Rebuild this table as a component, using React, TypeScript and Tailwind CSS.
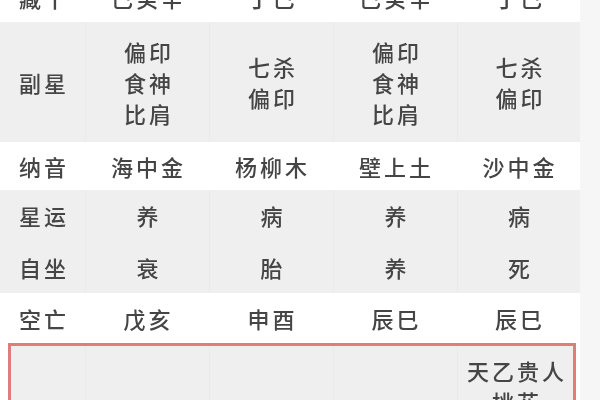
const cols = ["w-[85px]", "w-[124px]", "w-[124px]", "w-[124px]", "w-[123px]"];

type Row = { label: string; cells: string[][]; bg: string; h: string };

const rows: Row[] = [
  { label: "藏干", cells: [["己癸辛"], ["丁己"], ["己癸辛"], ["丁己"]], bg: "bg-white", h: "h-[49px] -mt-[27px]" },
  {
    label: "副星",
    cells: [["偏印", "食神", "比肩"], ["七杀", "偏印"], ["偏印", "食神", "比肩"], ["七杀", "偏印"]],
    bg: "bg-[#efefef]",
    h: "h-[120px]",
  },
  { label: "纳音", cells: [["海中金"], ["杨柳木"], ["壁上土"], ["沙中金"]], bg: "bg-white", h: "h-[48px]" },
  { label: "星运", cells: [["养"], ["病"], ["养"], ["病"]], bg: "bg-[#efefef]", h: "h-[51px]" },
  { label: "自坐", cells: [["衰"], ["胎"], ["养"], ["死"]], bg: "bg-[#efefef]", h: "h-[52px]" },
  { label: "空亡", cells: [["戊亥"], ["申酉"], ["辰巳"], ["辰巳"]], bg: "bg-white", h: "h-[50px]" },
];

function Cell({ lines, w, divider }: { lines: string[]; w: string; divider: boolean }) {
  return (
    <div
      className={`${w} flex flex-col items-center justify-center leading-[31px] ${
        divider ? "border-l border-[#eaeaea]" : ""
      }`}
    >
      {lines.map((t, i) => (
        <span key={i} className="tracking-[3px] pl-[3px]">
          {t}
        </span>
      ))}
    </div>
  );
}

export default function App() {
  return (
    <div
      className="w-[600px] h-[400px] overflow-hidden flex bg-[#f6f6f6] text-[#454545] text-[22px] font-medium blur-[0.4px]"
      style={{ fontFamily: "'Noto Sans CJK SC', 'Noto Sans', sans-serif" }}
    >
      <div className="w-[580px] flex flex-col">
        {rows.map((r) => (
          <div key={r.label} className={`flex shrink-0 ${r.bg} ${r.h}`}>
            <Cell lines={[r.label]} w={cols[0]} divider={false} />
            {r.cells.map((c, i) => (
              <Cell key={i} lines={c} w={cols[i + 1]} divider={r.bg !== "bg-white"} />
            ))}
          </div>
        ))}

        {/* 神煞 row, highlighted */}
        <div className="flex shrink-0 bg-white pl-[8px] pr-[4px]">
          <div className="flex-1 flex border-[3px] border-b-0 border-[#e27b7b] bg-[#efefef] h-[80px]">
            <div className="w-[74px]" />
            <div className="w-[124px] border-l border-[#eaeaea]" />
            <div className="w-[124px] border-l border-[#eaeaea]" />
            <div className="w-[124px] border-l border-[#eaeaea]" />
            <div className="flex-1 flex flex-col items-center pt-[9px] leading-[31px] border-l border-[#eaeaea]">
              <span className="tracking-[3px] pl-[3px]">天乙贵人</span>
              <span className="tracking-[3px] pl-[3px]">桃花</span>
            </div>
          </div>
        </div>
      </div>
      <div className="flex-1" />
    </div>
  );
}
